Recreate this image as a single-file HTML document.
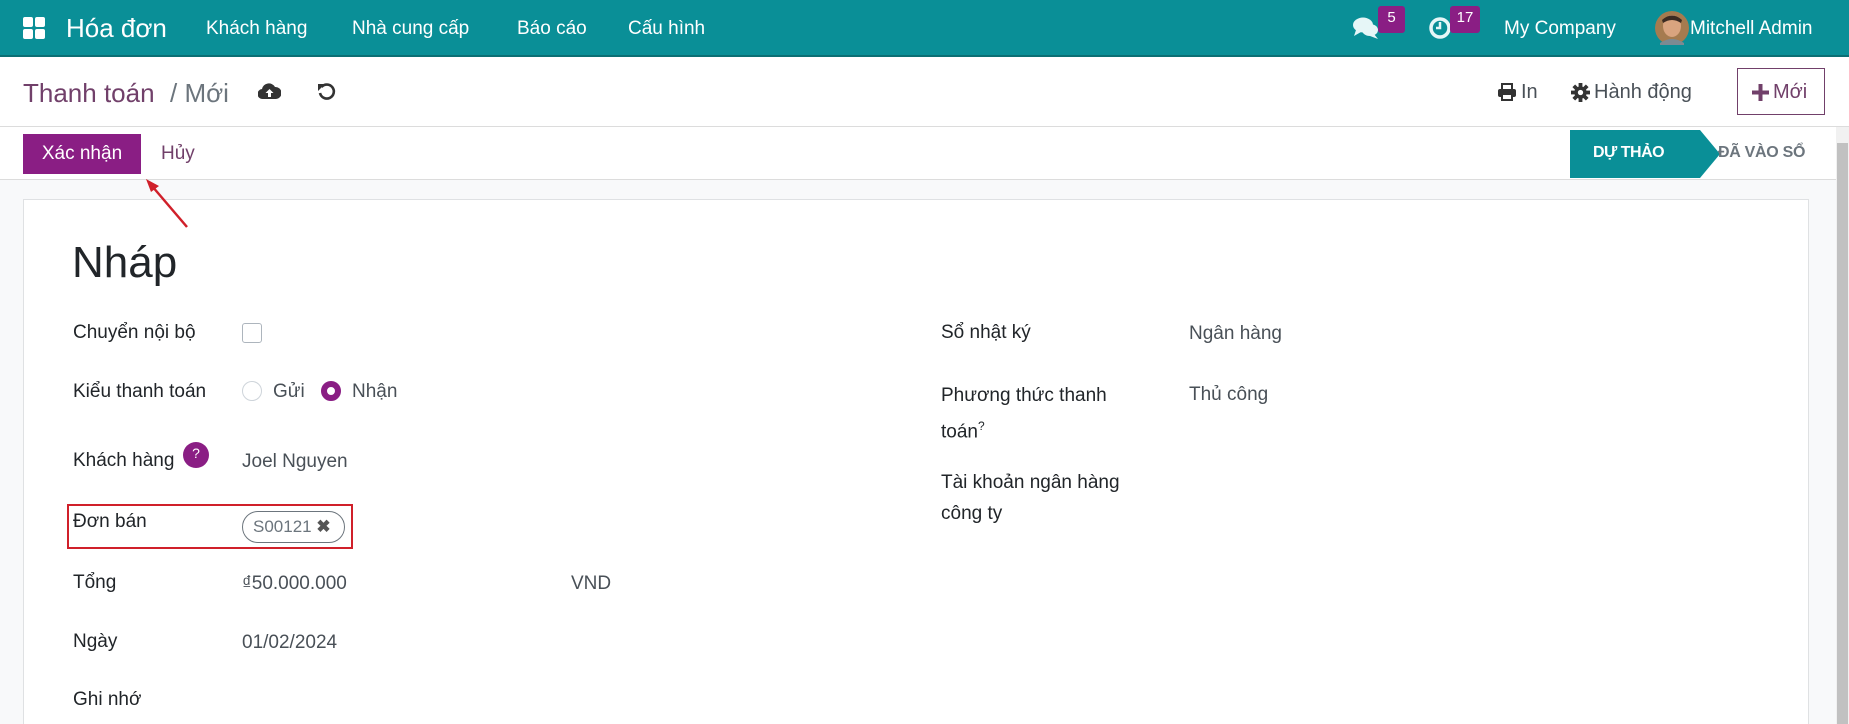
<!DOCTYPE html>
<html><head><meta charset="utf-8"><style>
*{box-sizing:border-box;margin:0;padding:0}
html{width:1849px;height:724px;overflow:hidden}
body{width:1849px;height:724px;overflow:hidden;font-family:"Liberation Sans",sans-serif;background:#f8f9fa;position:relative;color:#333}
.a{position:absolute;white-space:nowrap}
.nav{position:absolute;left:0;top:0;width:1849px;height:57px;background:#0a8f97;border-bottom:2px solid #0b6f74;color:#fff}
.nav .a{color:#fff;font-size:19px;top:18px}
.bar{position:absolute;left:0;top:57px;width:1849px;height:70px;background:#fff;border-bottom:1px solid #dcdcdc}
.row{position:absolute;left:0;top:127px;width:1836px;height:53px;background:#fff;border-bottom:1px solid #dcdcdc}
.card{position:absolute;left:23px;top:199px;width:1786px;height:560px;background:#fff;border:1px solid #dfe1e3}
.lbl{font-size:19px;color:#212529}
.val{font-size:19px;color:#495057}
.badge{position:absolute;background:#8a1e84;color:#fff;font-size:15px;border-radius:3px;text-align:center;height:27px;line-height:24px;top:6px}
</style></head><body>
<div class="nav">
 <svg class="a" style="left:23px;top:17px" width="22" height="22" viewBox="0 0 22 22"><rect x="0" y="0" width="10" height="10" rx="2" fill="#fff"/><rect x="12" y="0" width="10" height="10" rx="2" fill="#fff"/><rect x="0" y="12" width="10" height="10" rx="2" fill="#fff"/><rect x="12" y="12" width="10" height="10" rx="2" fill="#fff"/></svg>
 <div class="a" style="left:66px;top:13px;font-size:26px">Hóa đơn</div>
 <div class="a" style="left:206px">Khách hàng</div>
 <div class="a" style="left:352px">Nhà cung cấp</div>
 <div class="a" style="left:517px">Báo cáo</div>
 <div class="a" style="left:628px">Cấu hình</div>
 <svg class="a" style="left:1352px;top:16px" width="28" height="24" viewBox="0 0 28 24"><ellipse cx="11" cy="9" rx="10" ry="7.5" fill="#e6f6f7"/><path d="M4 14 L2 20 L9 16Z" fill="#e6f6f7"/><ellipse cx="18" cy="14" rx="8" ry="6" fill="#e6f6f7"/><path d="M22 18 L26 23 L18 20Z" fill="#e6f6f7"/></svg>
 <div class="badge" style="left:1378px;width:27px">5</div>
 <svg class="a" style="left:1428px;top:16px" width="24" height="24" viewBox="0 0 24 24"><circle cx="12" cy="12" r="9" fill="none" stroke="#e6f6f7" stroke-width="3.5"/><path d="M12 6 V12 H8" fill="none" stroke="#e6f6f7" stroke-width="2.5"/></svg>
 <div class="badge" style="left:1450px;width:30px">17</div>
 <div class="a" style="left:1504px">My Company</div>
 <svg class="a" style="left:1655px;top:11px" width="34" height="34" viewBox="0 0 34 34"><circle cx="17" cy="17" r="17" fill="#a57b4f"/><ellipse cx="17" cy="15" rx="9" ry="11" fill="#d9a47f"/><path d="M7 9 Q17 0 27 9 L26 12 Q17 6 8 12Z" fill="#3b2b22"/><path d="M5 32 Q17 24 29 32 L29 34 H5Z" fill="#7c8a92"/></svg>
 <div class="a" style="left:1690px">Mitchell Admin</div>
</div>
<div class="bar">
 <div class="a" style="left:23px;top:21px;font-size:26px;color:#71406a">Thanh toán</div>
 <div class="a" style="left:170px;top:21px;font-size:26px;color:#6c757d">/ Mới</div>
 <svg class="a" style="left:258px;top:25px" width="23" height="18" viewBox="0 0 23 18"><path d="M5 17 A5 5 0 0 1 4 7 A7 7 0 0 1 17 5 A5.5 5.5 0 0 1 18 17Z" fill="#333"/><path d="M11.5 7 L7.5 11 H10 V15 H13 V11 H15.5Z" fill="#fff"/></svg>
 <svg class="a" style="left:317px;top:25px" width="19" height="19" viewBox="0 0 19 19"><path d="M4.5 5 A7 7 0 1 1 3 11" fill="none" stroke="#333" stroke-width="2.6"/><path d="M1 2 L8 2 L1 9Z" fill="#333"/></svg>
 <svg class="a" style="left:1497px;top:26px" width="20" height="18" viewBox="0 0 20 18"><rect x="5" y="1" width="10" height="6" fill="none" stroke="#333" stroke-width="2"/><rect x="1" y="6" width="18" height="8" rx="2" fill="#333"/><rect x="5" y="11" width="10" height="6" fill="#fff" stroke="#333" stroke-width="2"/></svg>
 <div class="a" style="left:1521px;top:24px;font-size:20px;color:#495057">In</div>
 <svg class="a" style="left:1571px;top:26px" width="19" height="19" viewBox="0 0 20 20"><g fill="#333"><circle cx="10" cy="10" r="6.5"/><rect x="8" y="0" width="4" height="20"/><rect x="0" y="8" width="20" height="4"/><rect x="8" y="0" width="4" height="20" transform="rotate(45 10 10)"/><rect x="8" y="0" width="4" height="20" transform="rotate(-45 10 10)"/></g><circle cx="10" cy="10" r="2.8" fill="#fff"/></svg>
 <div class="a" style="left:1594px;top:24px;font-size:20px;color:#495057">Hành động</div>
 <div class="a" style="left:1737px;top:11px;width:88px;height:47px;border:1px solid #71406a;background:#fff"></div>
 <svg class="a" style="left:1752px;top:27px" width="17" height="17" viewBox="0 0 17 17"><path d="M6.5 0H10.5V6.5H17V10.5H10.5V17H6.5V10.5H0V6.5H6.5Z" fill="#71406a"/></svg>
 <div class="a" style="left:1773px;top:24px;font-size:20px;color:#71406a">Mới</div>
</div>
<div class="row">
 <div class="a" style="left:23px;top:7px;width:118px;height:40px;background:#8a1e84;color:#fff;font-size:19px;text-align:center;line-height:39px">Xác nhận</div>
 <div class="a" style="left:161px;top:16px;font-size:19px;color:#71406a">Hủy</div>
 <svg class="a" style="left:1570px;top:3px" width="152" height="48"><path d="M0 0H130L150 24L130 48H0Z" fill="#0a8f97"/></svg>
 <div class="a" style="left:1593px;top:17px;font-size:16px;font-weight:bold;color:#fff;letter-spacing:-0.5px">DỰ THẢO</div>
 <div class="a" style="left:1718px;top:17px;font-size:16px;font-weight:bold;color:#6c757d;letter-spacing:-0.3px">ĐÃ VÀO SỔ</div>
</div>
<div class="a" style="left:1836px;top:127px;width:13px;height:597px;background:#f1f1f1"></div>
<div class="a" style="left:1837px;top:143px;width:11px;height:581px;background:#c1c1c1"></div>
<div class="card"></div>
<div class="a" style="left:72px;top:238px;font-size:44px;color:#212529">Nháp</div>
<div class="a lbl" style="left:73px;top:322px">Chuyển nội bộ</div>
<div class="a" style="left:242px;top:323px;width:20px;height:20px;border:1px solid #adb5bd;border-radius:3px;background:#fff"></div>
<div class="a lbl" style="left:73px;top:381px">Kiểu thanh toán</div>
<div class="a" style="left:242px;top:381px;width:20px;height:20px;border:1px solid #ced4da;border-radius:50%"></div>
<div class="a val" style="left:273px;top:381px">Gửi</div>
<div class="a" style="left:321px;top:381px;width:20px;height:20px;border:6px solid #8a1e84;border-radius:50%;background:#fff"></div>
<div class="a val" style="left:352px;top:381px">Nhận</div>
<div class="a lbl" style="left:73px;top:450px">Khách hàng</div>
<div class="a" style="left:183px;top:442px;width:26px;height:26px;border-radius:50%;background:#8a1e84;color:#fff;font-size:14px;text-align:center;line-height:22px">?</div>
<div class="a val" style="left:242px;top:451px">Joel Nguyen</div>
<div class="a" style="left:67px;top:504px;width:286px;height:45px;border:2px solid #d0202a"></div>
<div class="a lbl" style="left:73px;top:511px">Đơn bán</div>
<div class="a" style="left:242px;top:511px;width:103px;height:32px;border:1px solid #6c757d;border-radius:16px;font-size:17px;color:#6c757d;padding-left:10px;line-height:30px">S00121 <b style="color:#555">✖</b></div>
<div class="a lbl" style="left:73px;top:572px">Tổng</div>
<div class="a val" style="left:242px;top:573px">₫50.000.000</div>
<div class="a val" style="left:571px;top:573px">VND</div>
<div class="a lbl" style="left:73px;top:631px">Ngày</div>
<div class="a val" style="left:242px;top:632px">01/02/2024</div>
<div class="a lbl" style="left:73px;top:689px">Ghi nhớ</div>
<div class="a lbl" style="left:941px;top:322px">Sổ nhật ký</div>
<div class="a val" style="left:1189px;top:323px">Ngân hàng</div>
<div class="a lbl" style="left:941px;top:380px;line-height:31px">Phương thức thanh<br>toán<sup style="font-size:12px">?</sup></div>
<div class="a val" style="left:1189px;top:384px">Thủ công</div>
<div class="a lbl" style="left:941px;top:467px;line-height:31px">Tài khoản ngân hàng<br>công ty</div>
<svg class="a" style="left:140px;top:172px" width="55" height="60"><line x1="47" y1="55" x2="12" y2="14" stroke="#d0202a" stroke-width="2.5"/><path d="M6 7 L19 14 L11 20Z" fill="#d0202a"/></svg>
</body></html>
